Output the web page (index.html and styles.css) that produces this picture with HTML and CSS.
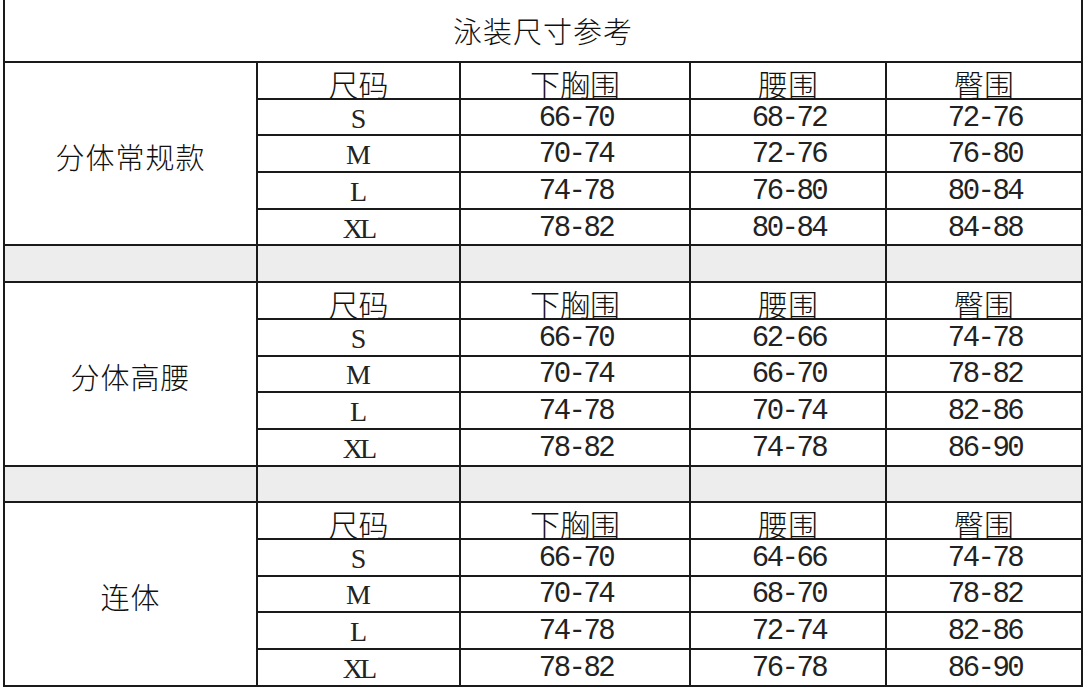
FILE: index.html
```html
<!DOCTYPE html>
<html lang="zh">
<head>
<meta charset="utf-8">
<title>泳装尺寸参考</title>
<link rel="stylesheet" href="styles.css">
</head>
<body>
<div class="sheet">
  <div class="cell title">泳装尺寸参考</div>

  <div class="cell label r1">分体常规款</div>
  <div class="cell head">尺码</div><div class="cell head">下胸围</div><div class="cell head">腰围</div><div class="cell head">臀围</div>
  <div class="cell size">S</div><div class="cell num">66-70</div><div class="cell num">68-72</div><div class="cell num">72-76</div>
  <div class="cell size">M</div><div class="cell num">70-74</div><div class="cell num">72-76</div><div class="cell num">76-80</div>
  <div class="cell size">L</div><div class="cell num">74-78</div><div class="cell num">76-80</div><div class="cell num">80-84</div>
  <div class="cell size xl">XL</div><div class="cell num">78-82</div><div class="cell num">80-84</div><div class="cell num">84-88</div>

  <div class="cell gap"></div><div class="cell gap"></div><div class="cell gap"></div><div class="cell gap"></div><div class="cell gap"></div>

  <div class="cell label r2">分体高腰</div>
  <div class="cell head">尺码</div><div class="cell head">下胸围</div><div class="cell head">腰围</div><div class="cell head">臀围</div>
  <div class="cell size">S</div><div class="cell num">66-70</div><div class="cell num">62-66</div><div class="cell num">74-78</div>
  <div class="cell size">M</div><div class="cell num">70-74</div><div class="cell num">66-70</div><div class="cell num">78-82</div>
  <div class="cell size">L</div><div class="cell num">74-78</div><div class="cell num">70-74</div><div class="cell num">82-86</div>
  <div class="cell size xl">XL</div><div class="cell num">78-82</div><div class="cell num">74-78</div><div class="cell num">86-90</div>

  <div class="cell gap"></div><div class="cell gap"></div><div class="cell gap"></div><div class="cell gap"></div><div class="cell gap"></div>

  <div class="cell label r3">连体</div>
  <div class="cell head">尺码</div><div class="cell head">下胸围</div><div class="cell head">腰围</div><div class="cell head">臀围</div>
  <div class="cell size">S</div><div class="cell num">66-70</div><div class="cell num">64-66</div><div class="cell num">74-78</div>
  <div class="cell size">M</div><div class="cell num">70-74</div><div class="cell num">68-70</div><div class="cell num">78-82</div>
  <div class="cell size">L</div><div class="cell num">74-78</div><div class="cell num">72-74</div><div class="cell num">82-86</div>
  <div class="cell size xl">XL</div><div class="cell num">78-82</div><div class="cell num">76-78</div><div class="cell num">86-90</div>
</div>
</body>
</html>
```

FILE: styles.css
```css
html, body {
  margin: 0;
  padding: 0;
  background: #ffffff;
  overflow: hidden;
}

body {
  font-family: "Noto Sans CJK SC", "Liberation Sans", sans-serif;
  color: #111111;
}

.sheet {
  margin-left: 3px;
  width: 1080px;
  display: grid;
  grid-template-columns: 253px 203px 230px 196px 196px;
  grid-template-rows: 63px repeat(17, 36.7px);
  border-left: 2px solid #1a1a1a;
}

.cell {
  box-sizing: border-box;
  border-right: 2px solid #1a1a1a;
  border-bottom: 2px solid #1a1a1a;
  display: flex;
  align-items: center;
  justify-content: center;
  overflow: visible;
  white-space: nowrap;
}

.title {
  grid-column: 1 / 6;
  font-size: 29px;
  font-weight: 300;
  letter-spacing: 1px;
  padding-bottom: 2px;
}

.label {
  grid-row: span 5;
  font-size: 29px;
  font-weight: 300;
  letter-spacing: 1px;
  padding-top: 4px;
}

.head {
  font-size: 30px;
  font-weight: 300;
  line-height: 30px;
  align-items: flex-end;
}

.num {
  font-family: "Liberation Mono", "DejaVu Sans Mono", monospace;
  font-size: 29px;
  line-height: 30px;
  letter-spacing: -2.5px;
  color: #222222;
  padding-top: 3px;
  padding-left: 2px;
}

.size {
  font-family: "Liberation Serif", "DejaVu Serif", serif;
  font-size: 28px;
  line-height: 30px;
  color: #222222;
  padding-top: 3px;
}

.size.xl {
  letter-spacing: -3px;
}

.gap {
  background: #ededed;
}
```
